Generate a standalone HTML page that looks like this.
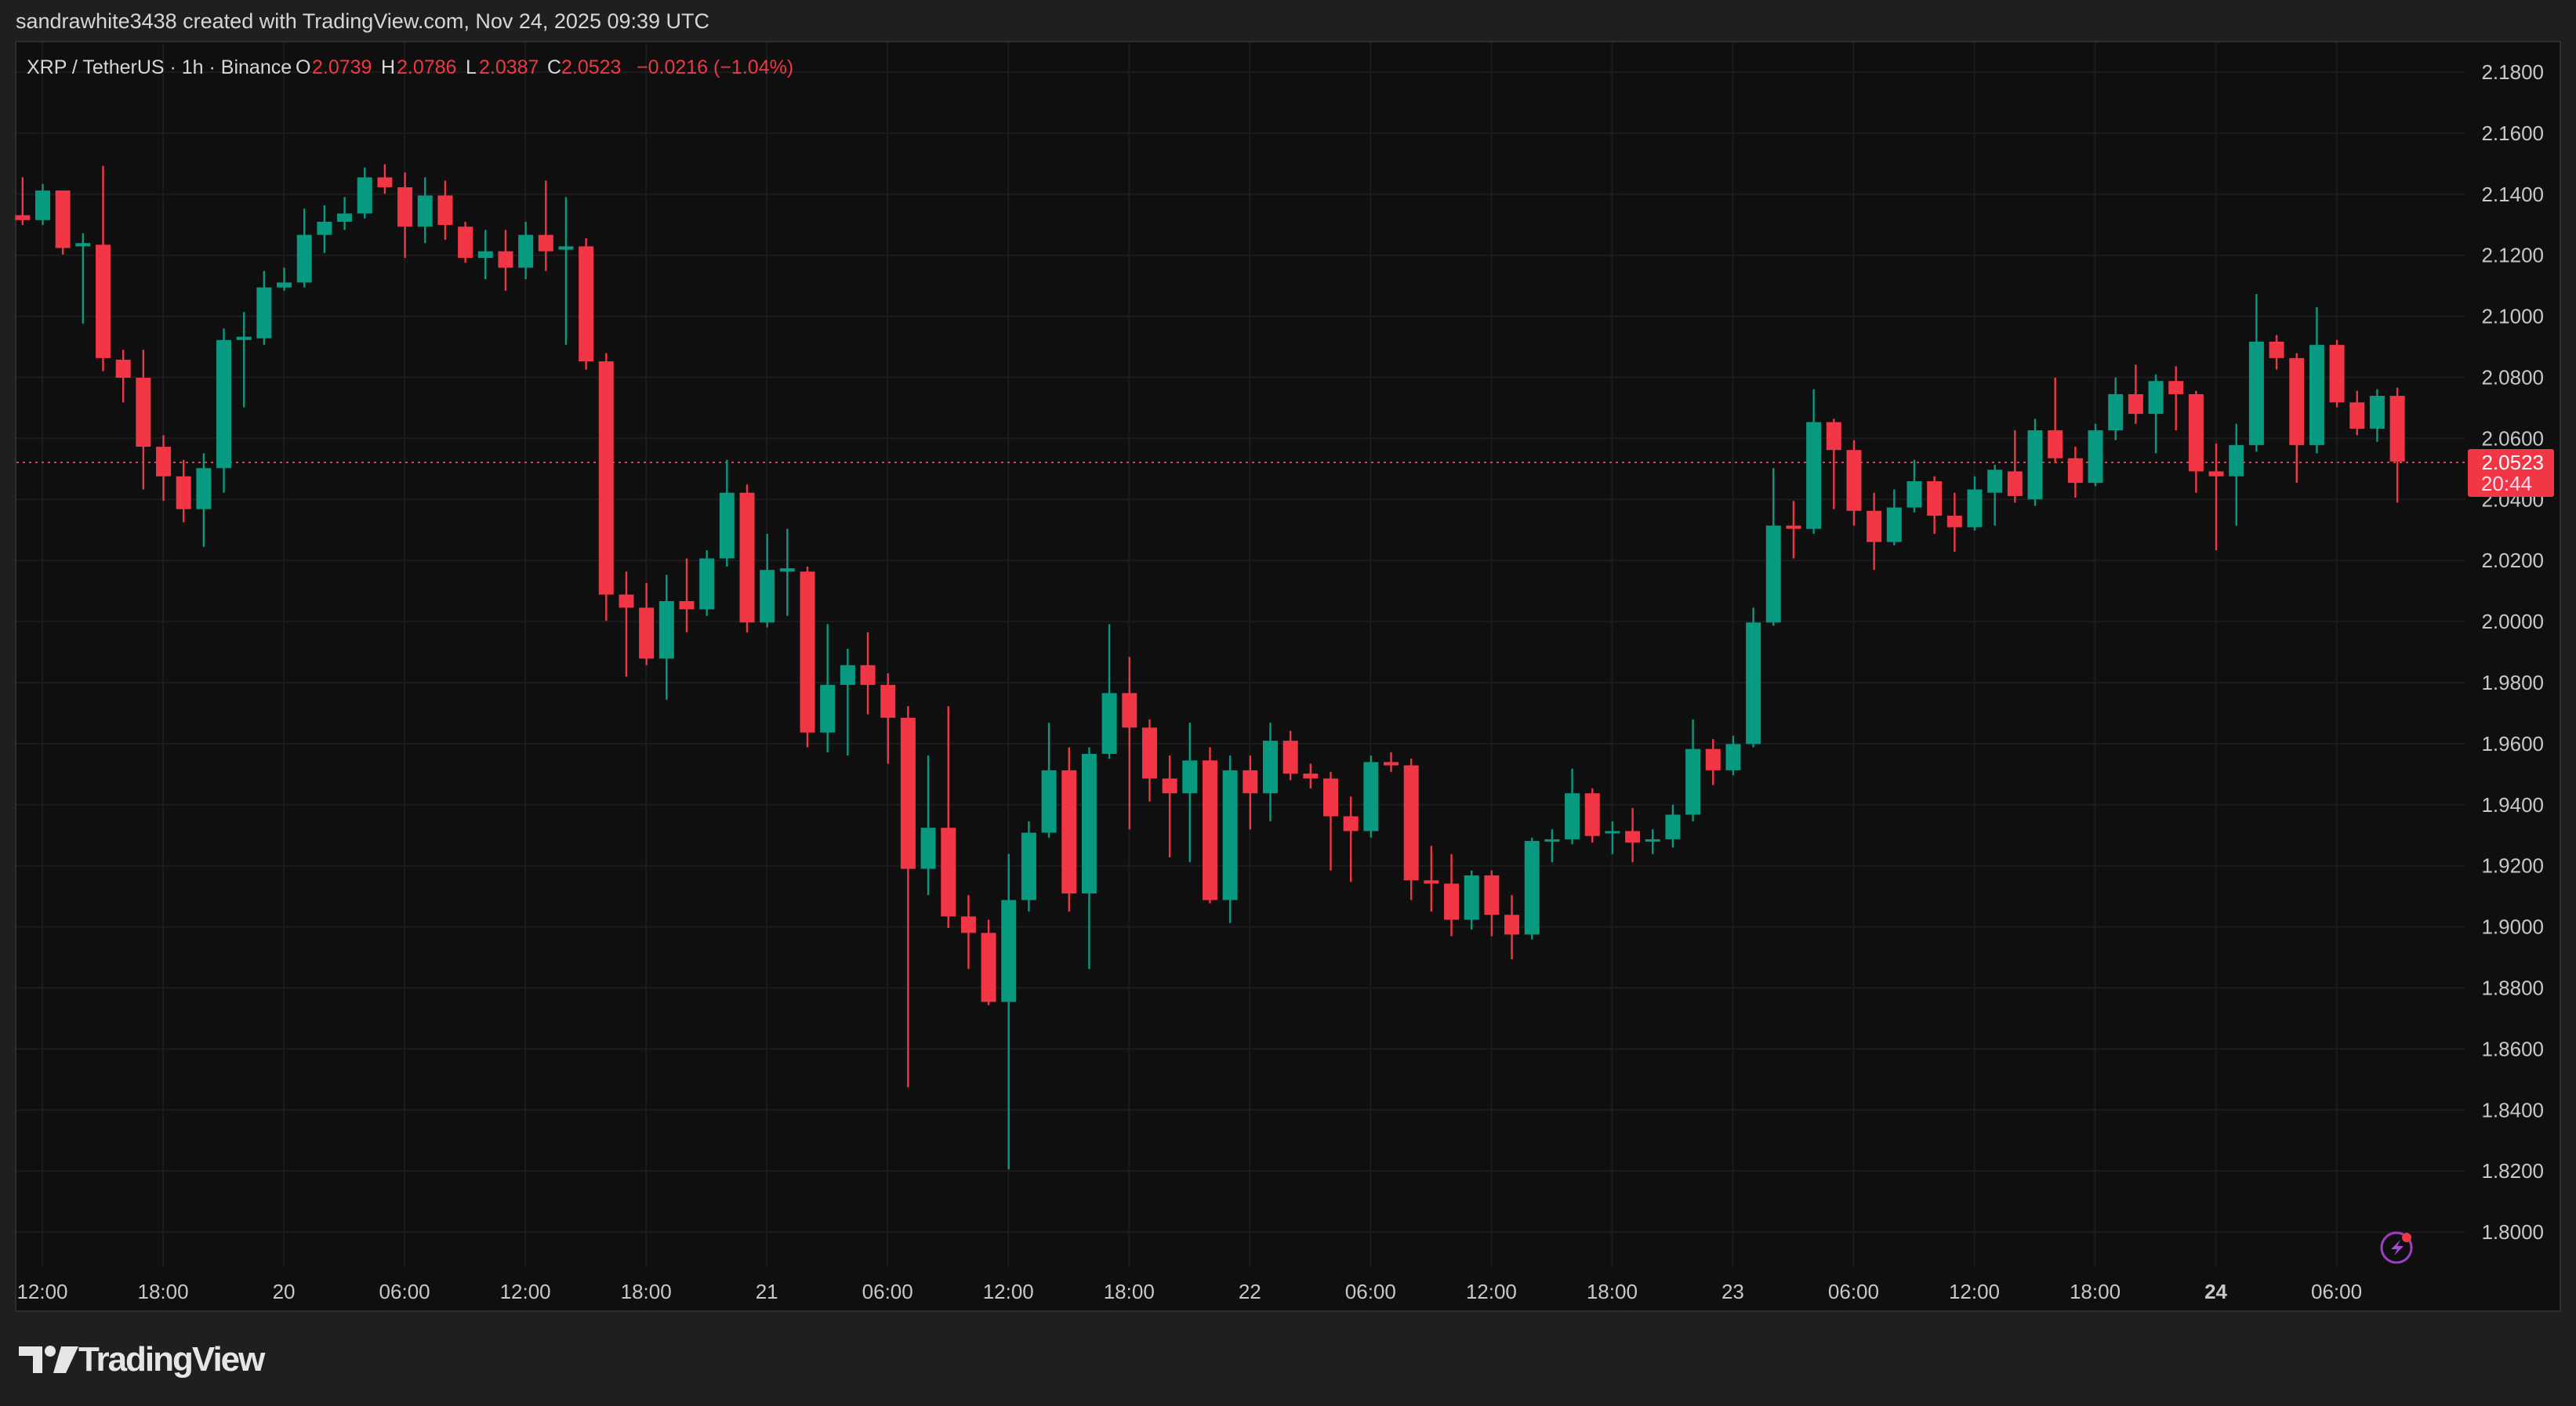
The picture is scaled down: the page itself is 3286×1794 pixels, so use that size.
<!DOCTYPE html>
<html><head><meta charset="utf-8">
<style>
html,body{margin:0;padding:0;background:#1f1f1f;width:3286px;height:1794px;overflow:hidden;font-family:"Liberation Sans",sans-serif;}
#hdr{position:absolute;left:20px;top:12px;font-size:27px;color:#d6d6d6;}
#logo{position:absolute;left:22px;top:1710px;font-size:44px;font-weight:bold;color:#e6e6e6;letter-spacing:-2px;}
svg{position:absolute;left:0;top:0;}
</style></head><body>
<div id="hdr">sandrawhite3438 created with TradingView.com, Nov 24, 2025 09:39 UTC</div>
<svg id="c" width="3286" height="1794" xmlns="http://www.w3.org/2000/svg"></svg>
<div id="logo"><svg width="90" height="50" style="position:absolute;left:0;top:4px" viewBox="0 0 90 50"><path d="M2 4h30v34H20V16H2z" fill="#e6e6e6"/><circle cx="42" cy="10" r="7" fill="#e6e6e6"/><path d="M56 4h22L62 38H46z" fill="#e6e6e6"/></svg><span style="position:absolute;left:78px;top:0;white-space:nowrap">TradingView</span></div>
<script>
var S=3286/1568;
var d=[[131,134,108,137],[134,116,112,137],[116,151,116,155],[150,148,142,197],[149,218,101,226],[219,230,213,245],[230,272,213,298],[272,290,265,305],[290,310,280,318],[310,285,276,333],[285,207,200,300],[207,205,190,248],[206,175,165,210],[175,172,163,177],[172,143,127,175],[143,135,125,154],[135,130,120,140],[130,108,102,133],[108,114,100,118],[114,138,105,157],[138,119,108,148],[119,137,110,146],[138,157,135,160],[157,153,140,170],[153,163,140,177],[163,143,135,170],[143,153,110,165],[152,150,120,210],[150,220,145,225],[220,362,215,378],[362,370,348,412],[370,401,355,405],[401,366,350,426],[366,371,340,385],[371,340,335,375],[340,300,280,345],[300,379,295,385],[379,347,325,382],[348,346,322,375],[348,446,345,455],[446,417,380,458],[417,405,395,460],[405,417,385,435],[417,437,410,465],[437,529,430,662],[529,504,460,545],[504,558,430,565],[558,568,545,590],[568,610,560,612],[610,548,520,712],[548,507,500,555],[507,469,440,510],[469,544,455,555],[544,459,455,590],[459,422,380,462],[422,443,400,505],[443,474,438,488],[474,483,460,522],[483,463,440,525],[463,548,455,550],[548,469,460,562],[469,483,460,505],[483,451,440,500],[451,471,445,475],[471,474,465,480],[474,497,470,530],[497,506,485,537],[506,464,460,510],[464,466,458,470],[466,536,462,548],[536,538,515,555],[538,560,520,570],[560,533,530,566],[533,557,530,570],[557,569,545,584],[569,512,510,572],[512,511,505,525],[511,483,468,514],[483,509,480,513],[507,506,500,520],[506,513,492,525],[512,511,505,520],[511,496,490,516],[496,456,438,500],[456,469,450,478],[469,453,448,472],[453,379,370,455],[379,320,285,381],[320,322,305,340],[322,257,237,325],[257,274,255,310],[274,311,268,320],[311,330,300,347],[330,309,298,332],[309,293,280,312],[293,314,290,325],[314,321,300,336],[321,298,290,323],[300,286,283,320],[287,302,262,306],[304,262,255,308],[262,279,230,282],[279,294,272,303],[294,262,258,296],[262,240,230,268],[240,252,222,258],[252,232,228,276],[232,240,223,262],[240,287,238,300],[287,290,270,335],[290,271,258,320],[271,208,179,275],[208,218,204,225],[218,271,215,294],[271,210,187,276],[210,245,207,248],[245,261,238,265],[261,241,237,269],[241,281,236,306]];
var h='';
h+='<rect x="20" y="53" width="3246" height="1620" fill="#0f0f0f" stroke="#2e2e2e" stroke-width="2"/>';
for(var k=0;k<20;k++){var p=2.18-k*0.02;var y=92+k*77.9;
 h+='<line x1="21" x2="3145" y1="'+y+'" y2="'+y+'" stroke="#1c1c1c" stroke-width="2"/>';
 h+='<text x="3245" y="'+(y+9)+'" fill="#c8c8c8" font-size="26" text-anchor="end" font-family="Liberation Sans">'+p.toFixed(4)+'</text>';}
var tl=['12:00','18:00','20','06:00','12:00','18:00','21','06:00','12:00','18:00','22','06:00','12:00','18:00','23','06:00','12:00','18:00','24','06:00'];
for(var k=0;k<tl.length;k++){var x=54+k*154.03;
 h+='<line x1="'+x+'" x2="'+x+'" y1="54" y2="1617" stroke="#1c1c1c" stroke-width="2"/>';
 h+='<text x="'+x+'" y="1657" fill="#c8c8c8" font-size="26" text-anchor="middle" font-family="Liberation Sans"'+(tl[k]=='24'?' font-weight="bold"':'')+'>'+tl[k]+'</text>';}
h+='<line x1="21" x2="3145" y1="590" y2="590" stroke="#f23645" stroke-width="2" stroke-dasharray="3,5"/>';
for(var i=0;i<d.length;i++){var c=d[i];var x=(13.75+i*12.25)*S;var g=c[1]<c[0];var col=g?'#089981':'#f23645';
 var t=Math.min(c[0],c[1])*S,b=Math.max(c[0],c[1])*S;if(b-t<3)b=t+3;
 h+='<rect x="'+(x-1.2)+'" y="'+c[2]*S+'" width="2.4" height="'+(c[3]-c[2])*S+'" fill="'+col+'"/>';
 h+='<rect x="'+(x-9.5)+'" y="'+t+'" width="19" height="'+(b-t)+'" fill="'+col+'"/>';}
h+='<rect x="3148" y="573" width="110" height="61" rx="3" fill="#f23645"/>';
h+='<text x="3245" y="599" fill="#fff" font-size="26" text-anchor="end" font-family="Liberation Sans">2.0523</text>';
h+='<text x="3230" y="626" fill="#fde" font-size="26" text-anchor="end" font-family="Liberation Sans">20:44</text>';
var lx=[[34,'#d6d6d6','XRP / TetherUS · 1h · Binance'],[377,'#d6d6d6','O'],[398,'#f23645','2.0739'],[486,'#d6d6d6','H'],[506,'#f23645','2.0786'],[594,'#d6d6d6','L'],[611,'#f23645','2.0387'],[698,'#d6d6d6','C'],[716,'#f23645','2.0523'],[812,'#f23645','−0.0216 (−1.04%)']];
for(var k=0;k<lx.length;k++)h+='<text x="'+lx[k][0]+'" y="94" fill="'+lx[k][1]+'" font-size="25" font-family="Liberation Sans">'+lx[k][2]+'</text>';
h+='<circle cx="3057" cy="1592" r="19" fill="none" stroke="#9c3fc2" stroke-width="3"/><path d="M3062 1582l-12 12h8l-4 8 12-12h-8z" fill="#a64fd0"/><circle cx="3070" cy="1579" r="6" fill="#f23645"/>';
document.getElementById('c').innerHTML=h;
</script>
</body></html>
